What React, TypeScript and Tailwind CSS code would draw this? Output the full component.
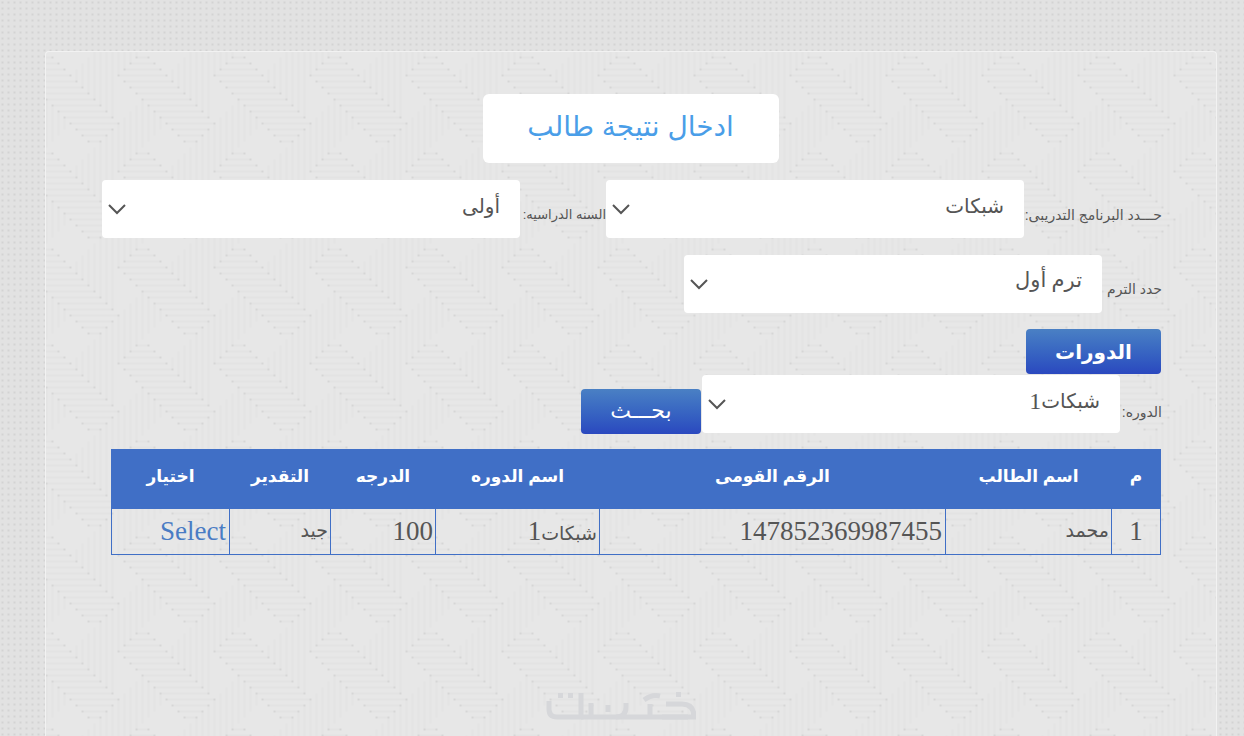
import React from 'react';

const ar = 'font-["Liberation_Sans","DejaVu_Sans",sans-serif]';
const serif = 'font-["Liberation_Serif","DejaVu_Sans",serif]';

// one 96px tile of the panel background, in 6px steps
const UNIT = 6;
const rowsH: [number, number, number][] = [
  [0, -3, 5], [1, -2, 6], [2, -1, 7], [3, 0, 8], [4, 1, 9], [5, 2, 10], [6, 3, 11], [7, 4, 12],
  [8, 5, 11], [9, 6, 10], [10, 7, 9],
  [12, 15, 17], [12, -1, 1], [13, 14, 18], [13, -2, 2], [14, 13, 19], [14, -3, 3], [15, 12, 20], [15, -4, 4],
  [0, 13, 21], [1, 14, 22], [2, 15, 23], [16, -3, 5], [16, 13, 21], [3, 16, 24],
];
const colsV: [number, number, number][] = [
  [1, 4, 10], [2, 5, 9], [3, 6, 8], [5, 14, 16], [6, 13, 17], [7, 12, 18], [8, 11, 19], [9, 10, 20], [10, 9, 21],
  [11, 8, 22], [12, 7, 15], [13, 6, 14], [14, 5, 13], [15, 4, 12], [0, 3, 11], [16, 3, 11],
  [5, -2, 0], [6, -3, 1], [7, -4, 2], [8, -5, 3], [9, -6, 4], [10, -7, 5], [11, -8, 6],
];

const PanelPattern = () => (
  <svg className="absolute inset-0 w-full h-full" aria-hidden="true">
    <defs>
      <pattern id="tile" x="0.5" y="29.5" width="96" height="96" patternUnits="userSpaceOnUse">
        {colsV.map(([c, a, b], i) => (
          <line key={i} x1={c * UNIT} y1={a * UNIT} x2={c * UNIT} y2={b * UNIT} stroke="#e0e0e0" strokeWidth="1" />
        ))}
        {rowsH.map(([j, a, b], i) => (
          <g key={i}>
            <line x1={a * UNIT} y1={j * UNIT} x2={b * UNIT} y2={j * UNIT} stroke="#dedede" strokeWidth="1" />
            <rect x={a * UNIT - 1} y={j * UNIT - 1} width="2" height="2" fill="#d6d6d6" />
            <rect x={b * UNIT - 1} y={j * UNIT - 1} width="2" height="2" fill="#d6d6d6" />
          </g>
        ))}
      </pattern>
    </defs>
    <rect width="100%" height="100%" fill="url(#tile)" />
  </svg>
);

const Logo = () => (
  <svg width="150" height="30" viewBox="0 0 150 30" fill="none" stroke="#d6d7da" strokeWidth="5" className="block">
    <path d="M3 9V17Q3 25 11 25H35V1" />
    <path d="M35 25H142" />
    <path d="M45 11V25M62 13V20" />
    <path d="M70 25Q80 25 80 15V11" />
    <path d="M104 25V12M98 8Q106 2 114 4" />
    <path d="M120 12H136Q148 12 148 25H116" />
    <rect x="12" y="1" width="5" height="5" fill="#d6d7da" stroke="none" />
    <rect x="22" y="1" width="5" height="5" fill="#d6d7da" stroke="none" />
    <rect x="130" y="0" width="5" height="5" fill="#d6d7da" stroke="none" />
  </svg>
);

const Chevron = () => (
  <svg width="20" height="12" viewBox="0 0 20 12" fill="none" stroke="#555" strokeWidth="2" className="absolute left-[5px] top-[23px] pointer-events-none">
    <path d="M2 2l8 8 8-8" />
  </svg>
);

const Dropdown = ({ children, size = 'text-[20px]' }: { children: React.ReactNode; size?: string }) => (
  <div className="relative w-[418px] h-[58px] shrink-0">
    <button className={`w-full h-full flex items-center bg-white rounded-[4px] pr-[20px] pb-[6px] text-[#555] ${size} ${serif}`}>
      {children}
    </button>
    <Chevron />
  </div>
);

const Label = ({ text, className }: { text: string; className: string }) => (
  <label className={`${className} shrink-0 whitespace-nowrap text-[#555] ${ar}`}>{text}</label>
);

const BlueButton = ({ text, className }: { text: string; className: string }) => (
  <button className={`${className} shrink-0 rounded-[4px] bg-gradient-to-b from-[#4a80c4] to-[#2b48bf] text-white ${ar}`}>
    {text}
  </button>
);

const headers = ['م', 'اسم الطالب', 'الرقم القومى', 'اسم الدوره', 'الدرجه', 'التقدير', 'اختيار'];
const widths = ['w-[49px]', 'w-[166px]', 'w-[346px]', 'w-[164px]', 'w-[105px]', 'w-[101px]', 'w-[118px]'];

const App: React.FC = () => {
  return (
    <div
      dir="rtl"
      className="h-[736px] overflow-hidden bg-[#e2e2e2] bg-[radial-gradient(circle,#d3d3d3_1px,transparent_1.5px)] bg-[size:6px_6px] bg-[position:-0.5px_-0.5px] pt-[51px] pr-[27px] pl-[45px]"
    >
      <div className="relative h-[700px] rounded-[4px] border-t border-x border-[#f2f2f2] bg-[#e7e7e7] overflow-hidden">
        <PanelPattern />
        <div className="relative pr-[54px]">
          <div className="mt-[42px] ml-[-1px] flex justify-center mr-[-54px]">
            <h1 className={`w-[296px] h-[69px] flex items-center justify-center bg-white rounded-[6px] pb-[4px] text-[28px] text-[#4a9ee8] ${ar}`}>
              ادخال نتيجة طالب
            </h1>
          </div>

          <div className="mt-[17px] flex items-center">
            <Label text="حـــدد البرنامج التدريبى:" className="w-[138px] mt-[12px] text-[14px]" />
            <Dropdown>شبكات</Dropdown>
            <Label text="السنه الدراسيه:" className="w-[86px] mt-[12px] text-[13px]" />
            <Dropdown>أولى</Dropdown>
          </div>

          <div className="mt-[17px] flex items-center">
            <Label text="حدد الترم" className="w-[60px] mt-[10px] text-[14px]" />
            <Dropdown size="text-[21px]">ترم أول</Dropdown>
          </div>

          <div className="mt-[16px] mr-[1px] flex">
            <BlueButton text="الدورات" className="w-[135px] h-[45px] text-[20px] font-bold" />
          </div>

          <div className="mt-[1px] flex items-start">
            <Label text="الدوره:" className="w-[42px] mt-[27px] text-[14px]" />
            <Dropdown size="text-[24px]"><span className="text-[20px]">شبكات</span>1</Dropdown>
            <div className="mt-[14px] mr-[1px]">
              <BlueButton text="بحـــث" className="w-[120px] h-[45px] pb-[3px] text-[22px]" />
            </div>
          </div>

          <table className={`mt-[15px] mr-[1px] w-[1049px] table-fixed border-collapse ${serif}`}>
            <thead>
              <tr className="bg-[#406fc6] h-[59px]">
                {headers.map((h, i) => (
                  <th key={h} className={`${widths[i]} border border-[#406fc6] pb-[4px] text-center text-white text-[17px] font-bold ${ar}`}>
                    {h}
                  </th>
                ))}
              </tr>
            </thead>
            <tbody>
              <tr className="h-[46px] text-[27px] text-[#555]">
                <td className="border border-[#406fc6] text-center">1</td>
                <td className="border border-[#406fc6] px-[2px] text-[19px]">محمد</td>
                <td className="border border-[#406fc6] px-[3px]">147852369987455</td>
                <td className="border border-[#406fc6] px-[2px]"><span className="text-[19px]">شبكات</span>1</td>
                <td className="border border-[#406fc6] px-[2px]">100</td>
                <td className="border border-[#406fc6] px-[2px] text-[19px]">جيد</td>
                <td className="border border-[#406fc6] px-[3px] text-[#4a7cc4]">Select</td>
              </tr>
            </tbody>
          </table>

          <div className="mt-[137px] flex justify-center mr-[-34px]">
            <Logo />
          </div>
        </div>
      </div>
    </div>
  );
};

export default App;
